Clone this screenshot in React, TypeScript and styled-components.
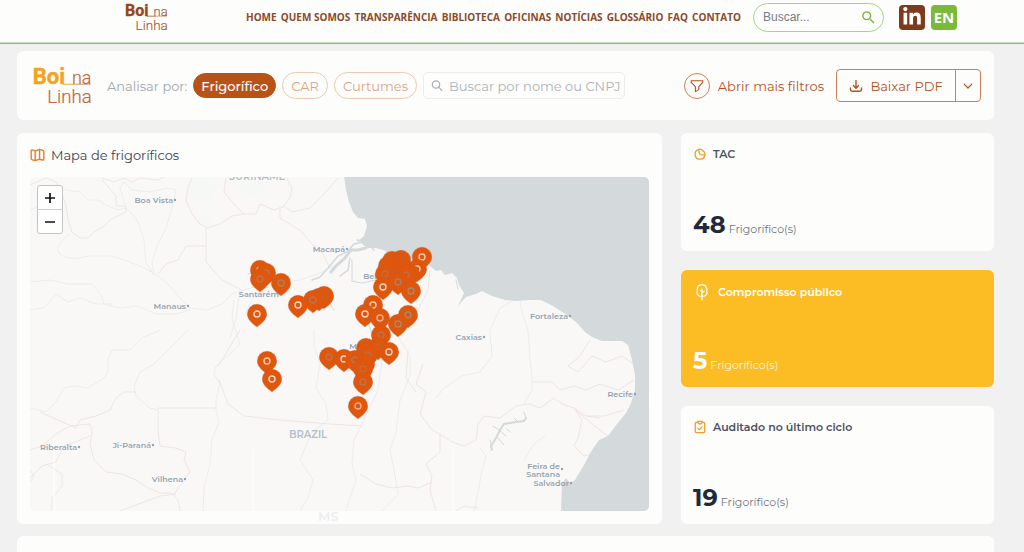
import React from "react";
import styled, { createGlobalStyle } from "styled-components";
import { FaLinkedinIn } from "react-icons/fa";
import { MdSearch } from "react-icons/md";

const color = {
  page: "#f1f1f2",
  surface: "#fdfdfb",
  brown: "#8a4a2c",
  rust: "#b85318",
  rustSoft: "#cf8155",
  rustText: "#b4521f",
  green: "#7ab93a",
  amber: "#fbbd23",
  ink: "#1f2937",
  text: "#4b5263",
  muted: "#a3a6ad",
  water: "#d4d9dc",
  land: "#f9f8f7",
  pin: "#e0560c",
};

const GlobalStyle = createGlobalStyle`
  * { box-sizing: border-box; }
  body {
    margin: 0;
    background: ${color.page};
    font-family: Montserrat, Inter, sans-serif;
    color: ${color.text};
  }
  button, input { font-family: inherit; margin: 0; }
  h2, p { margin: 0; }
`;

const Page = styled.div`
  min-height: 100vh;
  display: flex;
  flex-direction: column;
`;

const Header = styled.header`
  display: flex;
  align-items: center;
  height: 44px;
  padding: 0 67px 9px 126px;
  background: ${color.surface};
  border-bottom: 1px solid #8dc05a;
  box-shadow: inset 0 -1px #c9e2b3;
`;

const Nav = styled.nav`
  display: flex;
  justify-content: space-between;
  flex: 1;
  margin: 0 12px 0 78px;
`;

const NavLink = styled.a`
  font: 700 10px/16px "Open Sans", sans-serif;
  color: ${color.brown};
  text-decoration: none;
  white-space: nowrap;
`;

const SiteSearch = styled.form`
  display: flex;
  align-items: center;
  width: 131px;
  height: 29px;
  padding: 0 6px 0 9px;
  border: 1px solid #a8d284;
  border-radius: 15px;
  color: ${color.green};
`;

const SiteSearchInput = styled.input`
  flex: 1;
  min-width: 0;
  padding: 0;
  border: 0;
  outline: 0;
  background: none;
  font: 12px/16px "Liberation Sans", sans-serif;
  &::placeholder { color: #7c7c82; opacity: 1; }
`;

const IconButton = styled.button`
  display: flex;
  padding: 0;
  border: 0;
  background: none;
  color: inherit;
`;

const SquareLink = styled.a<{ $bg: string }>`
  display: flex;
  align-items: center;
  justify-content: center;
  width: 26px;
  height: 25px;
  border-radius: 4px;
  background: ${(p) => p.$bg};
  color: #fff;
  font: 700 15px/24px "Open Sans", sans-serif;
  text-decoration: none;
`;

const HeaderLinks = styled.div`
  display: flex;
  gap: 6px;
  margin-left: 15px;
`;

const Main = styled.main`
  flex: 1;
  display: flex;
  flex-direction: column;
  gap: 12px;
  padding: 7px 30px 0 17px;
`;

const Panel = styled.section`
  background: ${color.surface};
  border-radius: 6px;
`;

const FilterBar = styled(Panel)`
  display: flex;
  align-items: center;
  justify-content: space-between;
  height: 69px;
  margin-bottom: 1px;
  padding: 0 13px 0 17px;
`;

const Group = styled.div<{ $gap: number }>`
  display: flex;
  align-items: center;
  gap: ${(p) => p.$gap}px;
`;

const FilterLabel = styled.span`
  margin-left: 9px;
  font-size: 13px;
  white-space: nowrap;
  color: ${color.muted};
`;

const Pill = styled.button<{ $active?: boolean }>`
  height: ${(p) => (p.$active ? 25 : 27)}px;
  padding: 0 ${(p) => (p.$active ? 7 : 8)}px;
  border: 1px solid ${(p) => (p.$active ? color.rust : "#edc9b5")};
  border-radius: 14px;
  background: ${(p) => (p.$active ? color.rust : "transparent")};
  color: ${(p) => (p.$active ? "#fff" : "#dba489")};
  font-size: 13px;
  font-weight: ${(p) => (p.$active ? 500 : 400)};
  white-space: nowrap;
`;

const NameSearch = styled.label`
  display: flex;
  align-items: center;
  gap: 6px;
  width: 202px;
  height: 27px;
  padding: 0 2px 0 7px;
  border: 1px solid #ececef;
  border-radius: 5px;
  color: #a9adb8;
`;

const NameInput = styled.input`
  flex: 1;
  min-width: 0;
  padding: 0;
  border: 0;
  outline: 0;
  background: none;
  font-size: 13px;
  &::placeholder { color: #afb3bd; opacity: 1; }
`;

const MoreFilters = styled.button`
  display: flex;
  align-items: center;
  gap: 8px;
  padding: 0;
  border: 0;
  background: none;
  color: ${color.rustText};
  font-size: 13px;
  font-weight: 400;
  white-space: nowrap;
`;

const RoundIcon = styled.span`
  display: flex;
  align-items: center;
  justify-content: center;
  width: 26px;
  height: 26px;
  border: 1px solid ${color.rustSoft};
  border-radius: 50%;
`;

const SplitButton = styled.div`
  display: flex;
  height: 33px;
  border: 1px solid ${color.rustSoft};
  border-radius: 4px;
`;

const SplitPart = styled.button<{ $width: number }>`
  display: flex;
  align-items: center;
  justify-content: center;
  gap: 7px;
  width: ${(p) => p.$width}px;
  padding: 0;
  border: 0;
  background: none;
  color: ${color.rustText};
  font-size: 13px;
  font-weight: 400;
  white-space: nowrap;
  & + & { border-left: 1px solid ${color.rustSoft}; }
`;

const Dashboard = styled.div`
  display: grid;
  grid-template-columns: 645fr 313fr;
  gap: 19px;
`;

const MapCard = styled(Panel)`
  position: relative;
  padding: 0 13px 13px;
`;

const MapTitle = styled.h2`
  display: flex;
  align-items: center;
  gap: 6px;
  height: 44px;
  font-size: 13px;
  font-weight: 400;
  color: #3d4454;
`;

const MapFrame = styled.div`
  position: relative;
  border-radius: 5px;
  overflow: hidden;
  background: ${color.land};
`;

const MapDrawing = styled.svg`
  display: block;
  width: 100%;
  height: auto;
`;

const ZoomControl = styled.div`
  position: absolute;
  top: 8px;
  left: 7px;
  width: 26px;
  border: 1px solid #c4c5c7;
  border-radius: 3px;
  background: #fff;
`;

const ZoomButton = styled.button`
  display: flex;
  align-items: center;
  justify-content: center;
  width: 100%;
  height: 23px;
  padding: 0;
  border: 0;
  background: none;
  color: #111;
  & + & { border-top: 1px solid #ccc; height: 24px; }
`;

const RegionGhost = styled.span`
  position: absolute;
  left: 301px;
  bottom: 0;
  font-size: 13px;
  line-height: 16px;
  font-weight: 600;
  color: #efeff0;
`;

const Side = styled.div`
  display: flex;
  flex-direction: column;
  gap: 19px;
`;

const StatCard = styled(Panel)<{ $highlight?: boolean }>`
  flex: 1;
  display: flex;
  flex-direction: column;
  justify-content: space-between;
  padding: 12px 13px 8px 12px;
  background: ${(p) => (p.$highlight ? color.amber : color.surface)};
  color: ${(p) => (p.$highlight ? "#fff" : color.text)};
`;

const StatTitle = styled.h2<{ $highlight?: boolean }>`
  display: flex;
  align-items: center;
  gap: ${(p) => (p.$highlight ? 7 : 6)}px;
  height: ${(p) => (p.$highlight ? 21 : 17)}px;
  font-size: 11px;
  font-weight: 600;
`;

const StatValue = styled.p<{ $highlight?: boolean }>`
  display: flex;
  align-items: baseline;
  gap: 3px;
  font-size: 11px;
  line-height: 28px;
  color: ${(p) => (p.$highlight ? "#fff6dc" : "#6f7582")};
  strong {
    font-size: 24px;
    font-weight: 700;
    color: ${(p) => (p.$highlight ? "#fff" : color.ink)};
  }
`;

const NextPanel = styled(Panel)`
  flex: 1;
  min-height: 16px;
  border-radius: 6px 6px 0 0;
`;

const Logo = ({ width, main, thin }: { width: number; main: string; thin: string }) => (
  <svg width={width} viewBox="0 0 42 28" overflow="visible" role="img" aria-label="Boi na Linha">
    <text x="-1" y="13" fontFamily="'Liberation Sans Narrow', Roboto, sans-serif" fontWeight="700" fontSize="16" fill={main} stroke={main} strokeWidth="0.3">Boi</text>
    <path d="M21 13.2H30" stroke={main} strokeWidth="0.7" />
    <g fontFamily="Roboto, sans-serif" fontWeight="300" fontSize="13" fill={thin} stroke={thin} strokeWidth="0.15">
      <text x="27.5" y="13">na</text>
      <text x="9.6" y="27" fontSize="13.500">Linha</text>
    </g>
    <path d="M30 13.2H41" stroke={thin} strokeWidth="0.5" />
  </svg>
);

const stroke = {
  fill: "none",
  stroke: "currentColor",
  strokeLinecap: "round",
  strokeLinejoin: "round",
} as const;

const FunnelIcon = () => (
  <svg width="14" height="14" viewBox="0 0 14 14" {...stroke} strokeWidth="1.1">
    <path d="M1.2 1.8H12.8V3.4L8.8 7.6V10.6L5.4 12.6V7.6L1.2 3.4Z" />
  </svg>
);

const DownloadIcon = () => (
  <svg width="14" height="14" viewBox="0 0 14 14" {...stroke} strokeWidth="1.4">
    <path d="M7 1.5V9M4.4 6.6L7 9.2L9.6 6.6M1.5 9V10.6Q1.5 12.2 3.1 12.2H10.9Q12.5 12.2 12.5 10.6V9" />
  </svg>
);

const ChevronIcon = () => (
  <svg width="10" height="10" viewBox="0 0 10 10" {...stroke} strokeWidth="1.2">
    <path d="M1.2 3.2L5 7L8.8 3.2" />
  </svg>
);

const LensIcon = () => (
  <svg width="12" height="12" viewBox="0 0 12 12" {...stroke} strokeWidth="1.2">
    <circle cx="5" cy="4.500" r="3.700" />
    <path d="M7.700 7.200L10.800 10.300" />
  </svg>
);

const MapIcon = () => (
  <svg width="15" height="14" viewBox="0 0 15 14" {...stroke} stroke="#ef7d22" strokeWidth="1.4">
    <path d="M1.2 2.8Q1.2 1.6 2.4 1.9L5.2 2.8L9.6 1.3L12.6 2.2Q13.8 2.5 13.8 3.6V11.2Q13.8 12.4 12.6 12L9.6 11.2L5.2 12.6L2.4 11.8Q1.2 11.5 1.2 10.4ZM5.2 2.8V12.6M9.6 1.3V11.2" />
  </svg>
);

const PieIcon = () => (
  <svg width="14" height="14" viewBox="0 0 14 14" {...stroke} stroke="#f39c2b" strokeWidth="1.3">
    <path d="M6 2.3A5 5 0 1 0 12 8.2M6 2.3V5.2Q6.200 7.300 8.400 7.700L12 8.200M6 2.300Q7.400 1.600 9.400 3.200L11.200 5Q12.600 6.600 12 8.200" />
  </svg>
);

const TreeIcon = () => (
  <svg width="18" height="18" viewBox="0 0 18 18" {...stroke} stroke="#fff" strokeWidth="1.2">
    <path d="M9 17V6.2M9 9.8L11 8.2M9 8.6L7.4 7.4M9 13Q6.6 13.8 5.2 12.2Q3.2 10.4 4.4 8.2Q3.4 6.2 4.8 4.8Q4.8 2.4 7 2.2Q9 1 11 2.2Q13.2 2.4 13.2 4.8Q14.6 6.2 13.6 8.2Q14.8 10.4 12.8 12.2Q11.4 13.8 9 13" />
  </svg>
);

const ClipboardIcon = () => (
  <svg width="14" height="14" viewBox="0 0 14 14" {...stroke} stroke="#f39c2b" strokeWidth="1.3">
    <path d="M4.6 2.4H3.4Q2.3 2.4 2.3 3.5V11.6Q2.3 12.7 3.4 12.7H10.6Q11.7 12.7 11.7 11.6V3.5Q11.7 2.4 10.6 2.4H9.4M4.8 1.3H9.2V2.6L7 4.2L4.8 2.6ZM5 8.2L6.4 9.6L9 6.9" />
  </svg>
);

const SignIcon = ({ plus }: { plus?: boolean }) => (
  <svg width="12" height="12" viewBox="0 0 12 12" fill="none" stroke="currentColor" strokeWidth="1.7">
    <path d={plus ? "M1 6H11M6 1V11" : "M1 6H11"} />
  </svg>
);

const navItems = ["HOME", "QUEM SOMOS", "TRANSPARÊNCIA", "BIBLIOTECA", "OFICINAS", "NOTÍCIAS", "GLOSSÁRIO", "FAQ", "CONTATO"];

/* Each city: label, x of its right end, baseline y, and whether a dot follows. */
const cities: [string, number, number, boolean][] = [
  ["Boa Vista", 173, 203, true],
  ["Macapá", 345, 252, true],
  ["Manaus", 186, 309, true],
  ["Santarém", 279, 297, false],
  ["Belém", 390, 279, false],
  ["Marabá", 380, 349, false],
  ["Fortaleza", 568, 319, true],
  ["Caxias", 482, 340, true],
  ["Recife", 633, 397, true],
  ["Riberalta", 77, 450, true],
  ["Ji-Paraná", 151, 448, true],
  ["Vilhena", 183, 482, true],
  ["Feira de", 560, 469, false],
  ["Santana", 560, 477, false],
  ["Salvador", 569, 486, true],
];

/* Each pin: head centre x, y, and the opacity of its ring. */
const pins: [number, number, number][] = [
  [260, 269, 0.7], [266, 272, 0.3], [260, 278, 0.3], [281, 282, 0.4],
  [324, 295, 0], [319, 297, 0.3], [313, 299, 0.3], [298, 304, 0.9], [257, 313, 0.9],
  [401, 259, 0], [392, 260, 0], [422, 256, 0.8], [396, 263, 0], [388, 265, 0], [402, 267, 0],
  [417, 268, 0.8], [410, 273, 0], [385, 273, 0.2], [406, 274, 0.2], [383, 286, 0.9], [398, 281, 0.4], [411, 290, 0.5],
  [373, 304, 0.8], [365, 313, 0.9], [380, 317, 0.6], [408, 314, 0.5], [398, 323, 0.5], [381, 334, 0.3],
  [378, 346, 0.1], [366, 347, 0.1], [389, 351, 0.9], [368, 354, 0.2],
  [329, 356, 0.3], [344, 358, 0.9], [355, 359, 0.3], [365, 363, 0], [363, 368, 0.2],
  [363, 381, 0.3], [358, 405, 0.6], [267, 360, 0.8], [272, 378, 0.9],
];

const rivers = [
  "M30 210L45 204L52 196L58 184L66 190L80 192L88 200L98 200L108 206L118 210L126 208",
  "M70 234Q52 246 60 254Q70 262 88 256L112 256L124 260L140 266L152 272L158 276L168 284L180 298L190 308L208 310L222 304L232 294L250 288L270 284L300 280L322 272L334 266",
  "M154 275L152 262L158 244L166 228L172 208L176 190L168 188L150 192L132 190L124 182L120 188L126 208L132 214L138 222L144 240L146 262L154 275",
  "M30 282L50 280L68 284L92 284L102 296L104 304L120 308L138 306L156 314L176 314L190 310",
  "M30 310L44 308L56 294L68 302L80 298L96 304L112 304",
  "M30 408L46 412L56 402L64 388L74 386L88 388L104 378L108 372L108 360L112 350L130 350L142 338L160 330",
  "M188 330L172 346L154 364L140 372L134 386L136 396L150 408L158 410",
  "M234 300L232 318L240 345L216 366L214 374L220 384L216 400L216 410L219 422L212 440L210 464L204 488L203 511",
  "M240 290L236 318L230 338",
  "M280 282L262 290L252 300L244 316",
  "M314 330L314 346L320 364L316 388L326 404L328 420L312 432L300 460L313 480L308 498L300 511",
  "M393 330L400 340L410 356L410 376L400 400L396 432L390 450L394 470L398 494L382 511",
  "M382 360L380 374L378 390L362 424L354 440L352 464L356 480L350 498L346 511",
  "M512 301L500 308L490 330L492 356L480 372L462 376L444 388L436 398",
  "M480 448L486 456L482 470L478 492L474 511",
  "M545 436L534 444L524 460",
  "M520 301L522 312L528 330L530 360L532 376L532 390L524 404",
];

const borders = [
  "M30 185L46 178L56 182L62 194L66 206L68 220L72 232L80 238L88 238L94 232L104 226L110 220L126 212L126 206L116 206L116 196L102 180",
  "M102 178L114 182L124 178L132 182L140 178L158 180L164 177",
  "M192 178L188 188L186 200L192 214L200 224L208 228L220 224L232 216L244 214L256 214L260 204L274 210L284 206L292 212L310 208L324 194L338 178",
  "M226 178L224 192L234 204L244 214M286 177L292 188L290 198L282 208",
  "M206 228L206 262L222 280L242 290M206 246L186 246L178 260L166 264L158 274",
  "M280 208L280 218L300 230L312 244L322 252L330 268",
  "M30 450L42 446L56 434L70 426L90 424L92 432L90 444L94 460L106 472L122 474L136 480L148 488L160 493L172 493L178 500L180 511",
  "M40 412L62 422L76 428L80 420L96 416L110 410L116 398L124 392L136 392",
  "M158 408L158 430L160 446L176 448L186 452L184 460L190 472L180 486L174 494M158 408H216",
  "M219 380L228 404L244 416L280 420L330 424L362 426",
  "M240 330L228 350L218 366",
  "M30 478L42 466L56 462L64 446L80 440L90 436M30 470L34 476L30 482M46 464L62 474L62 486L52 498L52 511M176 494L160 496L120 511",
  "M382 330L392 344L388 360M423 364L416 384L426 392L420 414L432 430L440 434L440 452L426 464L432 476L430 490L436 511",
  "M360 474L376 484L392 488L408 486L418 488L432 482",
  "M408 350L406 378L416 392M440 434L452 442L464 446L476 440L478 424L484 416L500 418L516 406L530 404L540 408L554 398L562 404L574 408L586 416L600 418",
  "M533 382L552 382L560 390L574 386L586 390L600 384L618 390L634 380M574 408L580 414L600 430L610 438M586 416L604 416L624 410",
  "M574 408L582 420L578 438L574 446L584 456L592 454M568 366L580 356L590 340M568 366L578 372L592 356L606 362L622 356L634 364",
  "M430 270L428 290L420 306L412 316",
  "M456 511L464 506L478 508",
];

const COAST =
  "M344 176L346 190L349 202L353 212L358 218L365 219L367 226L364 236L360 240L363 245L368 248L376 248L386 251L384 262L392 258L410 258L430 266L436 271L441 270L445 275L452 273L457 278L459 285L464 293L458 306L466 297L476 294L482 291L492 296L505 300L515 301L530 300L541 300L553 306L567 315L577 323L585 332L592 337L602 341L612 341L622 341L628 345L632 360L635 375L635 390L631 403L626 413L617 424L608 436L599 440L592 450L584 465L575 480L570 483L566 478L562 484L561 511H652V176Z";

const AmazonMap = () => (
  <MapDrawing viewBox="30 177 619 334" role="img" aria-label="Mapa de frigoríficos">
    <g fill="#f6f8f5">
      <ellipse cx="203" cy="190" rx="12" ry="12" />
      <ellipse cx="252" cy="188" rx="14" ry="7" />
      <ellipse cx="206" cy="222" rx="8" ry="6" />
    </g>
    <g fill="none" strokeLinejoin="round">
      <g stroke="#eaedec">{rivers.map((d) => <path key={d} d={d} />)}</g>
      <g stroke="#f0e4e4">{borders.map((d) => <path key={d} d={d} />)}</g>
    </g>
    <path d={COAST} fill={color.water} />
    <g fill="none" stroke={color.water} strokeLinecap="round">
      <path strokeWidth="3" d="M366 248L358 250L351 250L345 258L336 266L331 272" />
      <path strokeWidth="1.500" d="M363 242L354 244L347 252L338 256L328 268L320 277L312 280M374 250L366 242L357 240M350 258L348 270L340 276M384 262L382 276L384 290L376 304" />
      <path strokeWidth="1" d="M352 281L362 283L376 280M352 260L352 281M358 242L362 238M372 304L368 322L372 334M248 274L262 270M334 296L330 304L334 310M450 274L446 268M458 289L456 280" />
      <path strokeWidth="2" d="M526 418L524 421L516 422L510 423L504 424L500 430L496 438L491 446L492 450" />
      <path strokeWidth="1" d="M524 412L526 418M518 422L514 418M501 431L493 426M497 437L504 445M500 431L506 436M490 440L492 449M506 428L510 432" />
    </g>
    <path d="M54 450V511M253 450V511M453 450V511" stroke="#fff" />
    <g fontWeight="600" fill="#94a3b1" fontSize="8">
      {cities.map(([name, x, y, dot]) => (
        <React.Fragment key={name}>
          <text x={x} y={y} textAnchor="end">{name}</text>
          {dot && <circle cx={x + 2} cy={y - 3} r="1.2" />}
        </React.Fragment>
      ))}
      <circle cx="562" cy="469" r="1.2" />
      <g fontSize="10" fill="#b4bec9" textAnchor="middle">
        <text x="308" y="438">BRAZIL</text>
        <text x="257" y="180">SURINAME</text>
      </g>
    </g>
    <g transform="translate(0 1)">
      {pins.map(([x, y, ring]) => (
        <g key={`${x}-${y}`} transform={`translate(${x} ${y})`}>
          <path d="M0 13.600C-4 10.500 -10.200 6 -10.200 0A10.200 10.200 0 0 1 10.200 0C10.200 6 4 10.500 0 13.600Z" fill="#9b6a50" opacity="0.35" />
          <path d="M0 12.800C-4 9.800 -9.700 5.500 -9.700 0A9.700 9.700 0 0 1 9.700 0C9.700 5.500 4 9.800 0 12.800Z" fill={color.pin} />
          <circle r="3" fill="none" stroke={ring > 0.5 ? "#f7e6dc" : "#a08a78"} strokeWidth="1.4" opacity={ring > 0.5 ? ring : ring * 2} />
        </g>
      ))}
    </g>
  </MapDrawing>
);

const stats = [
  { title: "TAC", value: 48, icon: <PieIcon />, highlight: false },
  { title: "Compromisso público", value: 5, icon: <TreeIcon />, highlight: true },
  { title: "Auditado no último ciclo", value: 19, icon: <ClipboardIcon />, highlight: false },
];

export default function App() {
  return (
    <Page>
      <GlobalStyle />
      <Header>
        <Logo width={42} main="#96441a" thin="#a8583a" />
        <Nav>
          {navItems.map((item) => (
            <NavLink key={item} href="#">{item}</NavLink>
          ))}
        </Nav>
        <SiteSearch>
          <SiteSearchInput aria-label="Buscar" placeholder="Buscar..." />
          <IconButton type="button" aria-label="Buscar"><MdSearch size={17} /></IconButton>
        </SiteSearch>
        <HeaderLinks>
          <SquareLink href="#" aria-label="LinkedIn" $bg="#7d3a1c"><FaLinkedinIn size={20} /></SquareLink>
          <SquareLink href="#" $bg={color.green}>EN</SquareLink>
        </HeaderLinks>
      </Header>
      <Main>
        <FilterBar>
          <Group $gap={6}>
            <Logo width={58} main="#f6a21e" thin="#c06a3c" />
            <FilterLabel>Analisar por:</FilterLabel>
            <Pill $active>Frigorífico</Pill>
            <Pill>CAR</Pill>
            <Pill>Curtumes</Pill>
            <NameSearch>
              <LensIcon />
              <NameInput aria-label="Buscar por nome ou CNPJ" placeholder="Buscar por nome ou CNPJ" />
            </NameSearch>
          </Group>
          <Group $gap={12}>
            <MoreFilters>
              <RoundIcon><FunnelIcon /></RoundIcon>
              Abrir mais filtros
            </MoreFilters>
            <SplitButton>
              <SplitPart $width={118}><DownloadIcon />Baixar PDF</SplitPart>
              <SplitPart $width={25} aria-label="Mais formatos"><ChevronIcon /></SplitPart>
            </SplitButton>
          </Group>
        </FilterBar>
        <Dashboard>
          <MapCard>
            <MapTitle><MapIcon />Mapa de frigoríficos</MapTitle>
            <MapFrame>
              <AmazonMap />
              <ZoomControl>
                <ZoomButton aria-label="Aproximar"><SignIcon plus /></ZoomButton>
                <ZoomButton aria-label="Afastar"><SignIcon /></ZoomButton>
              </ZoomControl>
            </MapFrame>
            <RegionGhost>MS</RegionGhost>
          </MapCard>
          <Side>
            {stats.map((s) => (
              <StatCard key={s.title} $highlight={s.highlight}>
                <StatTitle $highlight={s.highlight}>{s.icon}{s.title}</StatTitle>
                <StatValue $highlight={s.highlight}><strong>{s.value}</strong>Frigorífico(s)</StatValue>
              </StatCard>
            ))}
          </Side>
        </Dashboard>
        <NextPanel />
      </Main>
    </Page>
  );
}
